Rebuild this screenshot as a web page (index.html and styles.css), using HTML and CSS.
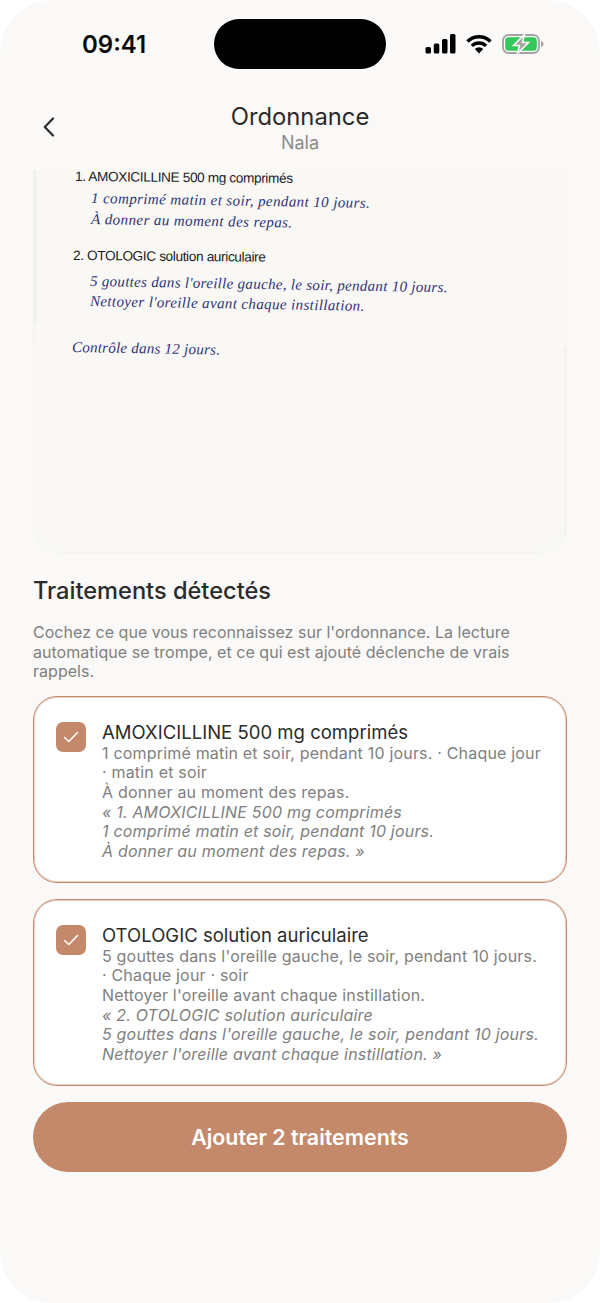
FILE: index.html
```html
<!DOCTYPE html>
<html lang="fr">
<head>
    <meta charset="UTF-8">
    <meta name="viewport" content="width=device-width, initial-scale=1.0">
    <title>Ordonnance</title>
    <link rel="stylesheet" href="styles.css">
</head>
<body>
    <div class="screen">
        <div class="status-bar">
            <div class="time">09:41</div>
            <div class="island"></div>
            <div class="status-icons">
                <svg class="signal" width="31" height="20" viewBox="0 0 31 20">
                    <rect x="0.500" y="13" width="5.500" height="6.500" rx="1.500"/>
                    <rect x="8.800" y="9.500" width="5.500" height="10" rx="1.500"/>
                    <rect x="17" y="5" width="5.500" height="14.500" rx="1.500"/>
                    <rect x="25" y="0" width="5.500" height="19.500" rx="1.500"/>
                </svg>
                <svg class="wifi" width="26" height="20" viewBox="0 0 26 20">
                    <path d="M1.500 7.500A16.300 16.300 0 0 1 24.500 7.500" fill="none" stroke="#000" stroke-width="3.400"/>
                    <path d="M5.900 11.900A10 10 0 0 1 20.100 11.900" fill="none" stroke="#000" stroke-width="3.400"/>
                    <path d="M13 19.500 8.800 15A6 6 0 0 1 17.200 15Z"/>
                </svg>
                <svg class="battery" width="43" height="20" viewBox="0 0 43 20">
                    <rect x="1" y="1" width="36" height="18" rx="5.500" fill="none" stroke="#a3a3a0" stroke-width="1.800"/>
                    <rect x="3.200" y="3.200" width="31.600" height="13.600" rx="3.500" fill="#34c759"/>
                    <path d="M39 7v6c1.600-.4 2.600-1.600 2.600-3S40.600 7.400 39 7z" fill="#a3a3a0"/>
                    <path d="M22.500 0.500 11.500 11.500h6L15.500 19.500 26.500 8.500h-6z" fill="#a3a3a0" stroke="#faf9f7" stroke-width="1.600"/>
                </svg>
            </div>
        </div>

        <div class="nav">
            <svg class="back" width="12" height="20" viewBox="0 0 12 20">
                <path d="M10 1.500 1.800 10l8.200 8.500" fill="none" stroke="#2b2b2b" stroke-width="2.200" stroke-linecap="round" stroke-linejoin="round"/>
            </svg>
            <div class="nav-title">Ordonnance</div>
            <div class="nav-sub">Nala</div>
        </div>

        <div class="scan">
            <div class="med med-first">1. AMOXICILLINE 500 mg comprimés</div>
            <div class="hand hand-a">1 comprimé matin et soir, pendant 10 jours.</div>
            <div class="hand hand-b">À donner au moment des repas.</div>
            <div class="med med-second">2. OTOLOGIC solution auriculaire</div>
            <div class="hand hand-c">5 gouttes dans l'oreille gauche, le soir, pendant 10 jours.</div>
            <div class="hand hand-d">Nettoyer l'oreille avant chaque instillation.</div>
            <div class="hand hand-e">Contrôle dans 12 jours.</div>
        </div>

        <h2 class="section-title">Traitements détectés</h2>
        <p class="section-text">Cochez ce que vous reconnaissez sur l'ordonnance. La lecture automatique se trompe, et ce qui est ajouté déclenche de vrais rappels.</p>

        <div class="card">
            <div class="check">
                <svg width="16" height="12" viewBox="0 0 16 12"><path d="M1.500 6.500 5.800 10.500 14.500 1.500" fill="none" stroke="#fff" stroke-width="1.500" stroke-linecap="round" stroke-linejoin="round"/></svg>
            </div>
            <div class="card-text">
                <div class="card-title">AMOXICILLINE 500 mg comprimés</div>
                <div>1 comprimé matin et soir, pendant 10 jours. · Chaque jour · matin et soir</div>
                <div>À donner au moment des repas.</div>
                <div class="quote">« 1. AMOXICILLINE 500 mg comprimés<br>1 comprimé matin et soir, pendant 10 jours.<br>À donner au moment des repas. »</div>
            </div>
        </div>

        <div class="card">
            <div class="check">
                <svg width="16" height="12" viewBox="0 0 16 12"><path d="M1.500 6.500 5.800 10.500 14.500 1.500" fill="none" stroke="#fff" stroke-width="1.500" stroke-linecap="round" stroke-linejoin="round"/></svg>
            </div>
            <div class="card-text">
                <div class="card-title">OTOLOGIC solution auriculaire</div>
                <div>5 gouttes dans l'oreille gauche, le soir, pendant 10 jours. · Chaque jour · soir</div>
                <div>Nettoyer l'oreille avant chaque instillation.</div>
                <div class="quote">« 2. OTOLOGIC solution auriculaire<br>5 gouttes dans l'oreille gauche, le soir, pendant 10 jours.<br>Nettoyer l'oreille avant chaque instillation. »</div>
            </div>
        </div>

        <button class="add-btn">Ajouter 2 traitements</button>
    </div>
</body>
</html>
```

FILE: styles.css
```css
* {
    box-sizing: border-box;
}

html, body {
    margin: 0;
    padding: 0;
    background: #fff;
}

body {
    width: 600px;
    height: 1303px;
    overflow: hidden;
    font-family: Inter, "Liberation Sans", sans-serif;
}

.screen {
    height: 1303px;
    padding: 19px 33px 0;
    background: #faf9f7;
    border-radius: 52px;
    overflow: hidden;
}

/* status bar */
.status-bar {
    display: flex;
    align-items: center;
    height: 50px;
}

.time {
    width: 181px;
    padding-left: 49px;
    font-size: 24px;
    font-weight: 600;
    color: #0a0a0a;
}

.island {
    width: 172px;
    height: 50px;
    background: #000;
    border-radius: 25px;
}

.status-icons {
    display: flex;
    align-items: center;
    gap: 10px;
    margin-left: 39px;
}

.signal, .wifi {
    fill: #000;
}

/* header */
.nav {
    position: relative;
    height: 101px;
    padding-top: 33px;
    text-align: center;
}

.back {
    position: absolute;
    left: 10px;
    top: 48px;
}

.nav-title {
    font-size: 23.800px;
    line-height: 30px;
    color: #2b2b2b;
}

.nav-sub {
    font-size: 18px;
    line-height: 22px;
    color: #8a8a8a;
}

/* photo of the prescription */
.scan {
    height: 383px;
    padding-left: 38px;
    background:
        linear-gradient(270deg, #eeede8 0, #f9f8f4 3px) right bottom / 100% 205px no-repeat,
        linear-gradient(90deg, #eeeee9 0, #f7f6f2 3px, #f9f8f4 6px) left top / 100% 152px no-repeat,
        linear-gradient(90deg, #f6f5f1 0, #f9f8f4 3px);
    border: 1px solid #f5f4f0;
    border-top: 0;
    border-radius: 0 0 28px 28px;
    overflow: hidden;
}

.med {
    font-family: "Liberation Sans", Arial, sans-serif;
    font-size: 13.600px;
    line-height: 14px;
    letter-spacing: -.35px;
    color: #1c1c1c;
    transform-origin: left center;
    transform: rotate(0.5deg);
}

.med-first {
    margin-left: 3px;
}

.med-second {
    margin-top: 20px;
    margin-left: 1px;
}

.hand {
    font-family: "Liberation Serif", serif;
    font-style: italic;
    font-size: 15px;
    line-height: 20px;
    letter-spacing: .35px;
    color: #2e3378;
    transform-origin: left center;
    transform: rotate(1deg);
}

.hand-a { margin-top: 4px; margin-left: 19px; letter-spacing: .4px; }
.hand-b { margin-top: 1px; margin-left: 19px; letter-spacing: .42px; }
.hand-c { margin-top: 8px; margin-left: 18px; letter-spacing: .3px; }
.hand-d { margin-top: 0; margin-left: 18px; letter-spacing: .37px; }
.hand-e { margin-top: 26px; margin-left: 0; letter-spacing: .25px; }

/* detected treatments */
.section-title {
    margin: 24px 0 0;
    font-size: 23.600px;
    line-height: 28px;
    font-weight: 500;
    color: #2b2b2b;
}

.section-text {
    margin: 18px 0 14px;
    font-size: 16px;
    line-height: 19.600px;
    letter-spacing: .03px;
    color: #808080;
}

.card {
    display: flex;
    height: 187px;
    margin-bottom: 16px;
    padding: 24px 22px 0;
    background: #fff;
    border: 1px solid #c4896b;
    box-shadow: inset 0 0 0 1px rgba(196, 137, 107, .4);
    border-radius: 24px;
}

.check {
    display: flex;
    align-items: center;
    justify-content: center;
    flex: none;
    width: 30px;
    height: 30px;
    margin-top: 1px;
    margin-right: 16px;
    background: #c4896b;
    border-radius: 7px;
}

.card-text {
    font-size: 16px;
    line-height: 19.600px;
    letter-spacing: .19px;
    color: #808080;
}

.card-title {
    margin-top: -1px;
    font-size: 18.500px;
    line-height: 24px;
    letter-spacing: .02px;
    color: #2b2b2b;
}

.quote {
    font-style: italic;
}

.add-btn {
    display: block;
    width: 100%;
    height: 70px;
    padding: 0;
    border: 0;
    border-radius: 35px;
    background: #c4896b;
    color: #fff;
    font-family: inherit;
    font-size: 21.400px;
    font-weight: 600;
}
```
